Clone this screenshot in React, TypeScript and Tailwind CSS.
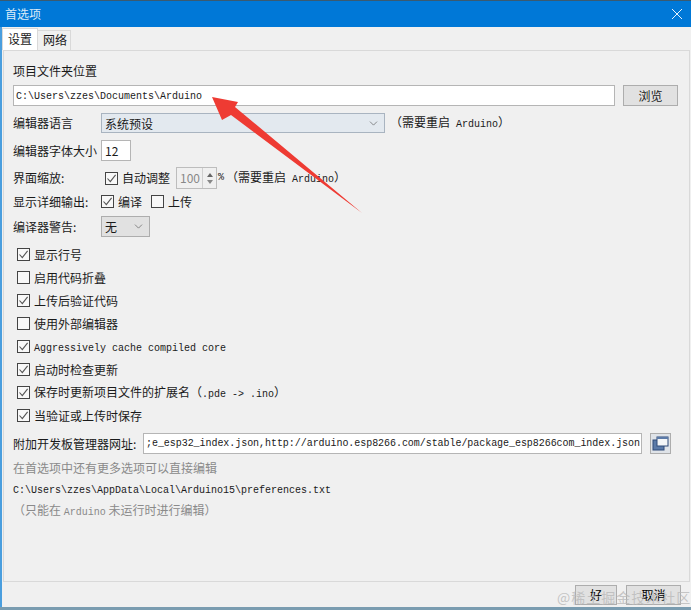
import type { ReactNode } from "react";
import { ChevronDown } from "lucide-react";

const mono = "font-['Liberation_Mono','Noto_Sans_CJK_SC',monospace] text-[10px]";

function Check({ checked, label }: { checked?: boolean; label: ReactNode }) {
  return (
    <label className="flex items-center h-[23px]">
      <span className="w-[13px] h-[13px] border border-[#444] bg-[#f8f8f8] flex items-center justify-center mr-[4px]">
        {checked && (
          <svg width="11" height="11" viewBox="0 0 11 11" fill="none" stroke="#555" strokeWidth="1.1">
            <path d="M1.5 5.5 L4.3 8.6 L9.6 1.8" />
          </svg>
        )}
      </span>
      <span>{label}</span>
    </label>
  );
}

function Select({ value, className }: { value: string; className: string }) {
  return (
    <div className={`${className} flex items-center justify-between pl-[3px] pr-[4px]`}>
      <span className="pt-[1px]">{value}</span>
      <ChevronDown size={13} strokeWidth={1.2} color="#555" />
    </div>
  );
}

export default function App() {
  return (
    <div className="w-[691px] h-[610px] flex flex-col overflow-hidden bg-[#f0f0f0] text-[#1a1a1a] text-[12px] leading-none font-['Noto_Sans_CJK_SC','Liberation_Sans',sans-serif] relative">
      <div className="h-[1px] bg-[#3a5a70]" />
      <div className="h-[26px] bg-[#0078d7] text-white text-[12px] flex items-center justify-between pl-[5px] pr-[8px]">
        <span className="text-[#dcebf8]">首选项</span>
        <svg width="12" height="12" viewBox="0 0 12 12" stroke="#e8f2fb" strokeWidth="1">
          <path d="M1 1 L11 11 M11 1 L1 11" />
        </svg>
      </div>

      <div className="flex-1 flex flex-col border-l-2 border-l-[#4a9ede] pr-[1px]">
        <div className="flex h-[23px] items-end">
          <div className="h-[22px] w-[36px] bg-white border border-b-0 border-[#d9d9d9] flex items-center justify-center pb-[2px]">设置</div>
          <div className="h-[20px] w-[33px] bg-[#f0f0f0] border border-l-0 border-b-0 border-[#d9d9d9] flex items-center justify-center pl-[2px] pb-[1px]">网络</div>
        </div>

        <div className="h-[532px] ml-[1px] border border-[#d9d9d9] bg-[#f0f0f0] pl-[9px] pr-[10px] pt-[13px] flex flex-col">
          <div className="h-[14px] flex items-center">项目文件夹位置</div>
          <div className="flex items-center mt-[7px] gap-[8px]">
            <div className={`${mono} w-[602px] h-[21px] bg-white border border-[#b5b5b5] flex items-center pl-[2px] pt-[2px]`}>
              C:\Users\zzes\Documents\Arduino
            </div>
            <div className="w-[55px] h-[21px] bg-[#e1e1e1] border border-[#adadad] flex items-center justify-center">浏览</div>
          </div>

          <div className="flex items-center mt-[7px] h-[20px]">
            <span className="w-[88px]">编辑器语言</span>
            <Select value="系统预设" className="w-[284px] h-[20px] border border-[#a9b4c0] bg-[#e3e9ef]" />
            <span className="ml-[5px]">（需要重启<span className={`${mono} ml-[6px]`}>Arduino</span>）</span>
          </div>

          <div className="flex items-center mt-[7px] h-[21px]">
            <span className="w-[88px] whitespace-nowrap">编辑器字体大小</span>
            <div className="w-[30px] h-[21px] bg-white border border-[#b5b5b5] flex items-center pl-[3px]">12</div>
          </div>

          <div className="flex items-center mt-[6px] h-[22px]">
            <span className="w-[92px]">界面缩放:</span>
            <Check checked label="自动调整" />
            <div className="ml-[6px] w-[41px] h-[22px] border border-[#bdbdbd] bg-[#f0f0f0] flex items-center justify-between pl-[3px] text-[#888]">
              <span>100</span>
              <span className="w-[14px] h-full border-l border-[#d0d0d0] flex flex-col items-center justify-center gap-[3px]">
                <span className="w-0 h-0 border-x-[3px] border-x-transparent border-b-[4px] border-b-[#666]" />
                <span className="w-0 h-0 border-x-[3px] border-x-transparent border-t-[4px] border-t-[#888]" />
              </span>
            </div>
            <span className={`${mono} ml-[1px]`}>%</span>
            <span className="ml-[2px]">（需要重启<span className={`${mono} ml-[6px]`}>Arduino</span>）</span>
          </div>

          <div className="flex items-center mt-[2px] h-[21px]">
            <span className="w-[88px]">显示详细输出:</span>
            <Check checked label="编译" />
            <span className="w-[9px]" />
            <Check label="上传" />
          </div>

          <div className="flex items-center mt-[4px] h-[21px]">
            <span className="w-[88px]">编译器警告:</span>
            <Select value="无" className="w-[49px] h-[21px] border border-[#adadad] bg-[#e1e1e1]" />
          </div>

          <div className="flex flex-col mt-[6px] pl-[4px]">
            <Check checked label="显示行号" />
            <Check label="启用代码折叠" />
            <Check checked label="上传后验证代码" />
            <Check label="使用外部编辑器" />
            <Check checked label={<span className={mono}>Aggressively cache compiled core</span>} />
            <Check checked label="启动时检查更新" />
            <Check checked label={<>保存时更新项目文件的扩展名（<span className={mono}>.pde -&gt; .ino</span>）</>} />
            <Check checked label="当验证或上传时保存" />
          </div>

          <div className="flex items-center mt-[6px] h-[21px]">
            <span className="w-[130px] whitespace-nowrap">附加开发板管理器网址:</span>
            <div className={`${mono} tracking-[-0.05px] w-[499px] h-[21px] bg-white border border-[#b5b5b5] flex items-center pl-[2px] whitespace-nowrap`}>
              ;e_esp32_index.json,http://arduino.esp8266.com/stable/package_esp8266com_index.json
            </div>
            <button className="ml-[8px] w-[21px] h-[21px] bg-[#dfe3e8] border border-[#adadad] flex items-center justify-center">
              <svg width="17" height="15" viewBox="0 0 17 15">
                <rect x="1" y="4" width="11" height="10" fill="#5b7aa8" stroke="#2f4a78" />
                <rect x="5" y="1" width="11" height="9" fill="#f4f6f8" stroke="#2f4a78" />
                <rect x="5" y="1" width="11" height="2" fill="#5b7aa8" />
              </svg>
            </button>
          </div>

          <div className="mt-[8px] h-[14px] text-[#8a8a8a]">在首选项中还有更多选项可以直接编辑</div>
          <div className={`${mono} mt-[8px] h-[14px] flex items-center`}>C:\Users\zzes\AppData\Local\Arduino15\preferences.txt</div>
          <div className="mt-[6px] h-[14px] text-[#8a8a8a]">（只能在 <span className={mono}>Arduino</span> 未运行时进行编辑）</div>
        </div>

        <div className="flex justify-end gap-[9px] pr-[9px] mt-[3px]">
          <button className="w-[42px] h-[20px] bg-[#e1e1e1] border border-[#adadad] text-black">好</button>
          <button className="w-[55px] h-[20px] bg-[#e1e1e1] border border-[#adadad] text-black">取消</button>
        </div>
      </div>

      <div className="h-[3px] bg-[#7a9cb0]" />

      {/* watermark */}
      <div className="absolute left-[557px] top-[590px] text-[14px] tracking-[1px] text-[#b9b9b9]/80 whitespace-nowrap">@稀土掘金技术社区</div>

      {/* red arrow annotation */}
      <svg className="absolute left-0 top-0 pointer-events-none" width="691" height="610" viewBox="0 0 691 610">
        <polygon points="212,97 238,102 235,107 362,213 231,115 222,120" fill="#ee3b33" />
      </svg>
    </div>
  );
}
